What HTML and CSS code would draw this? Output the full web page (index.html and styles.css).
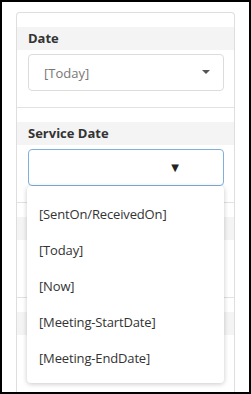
FILE: index.html
```html
<!DOCTYPE html>
<html lang="en">
<head>
    <meta charset="UTF-8">
    <meta name="viewport" content="width=device-width, initial-scale=1.0">
    <title>Date Fields</title>
    <link rel="stylesheet" href="styles.css">
</head>
<body>
    <div class="frame">
        <div class="panel">
            <div class="section">
                <div class="section-title">Date</div>
                <div class="select">
                    <span class="select-value">[Today]</span>
                    <span class="caret"></span>
                </div>
            </div>
            <div class="section">
                <div class="section-title">Service Date</div>
                <div class="select select-open">
                    <span class="caret-glyph">&#9660;</span>
                    <ul class="dropdown">
                        <li>[SentOn/ReceivedOn]</li>
                        <li>[Today]</li>
                        <li>[Now]</li>
                        <li>[Meeting-StartDate]</li>
                        <li>[Meeting-EndDate]</li>
                    </ul>
                </div>
            </div>
            <!-- these two sit under the open list -->
            <div class="section">
                <div class="section-title"></div>
                <div class="select"></div>
            </div>
            <div class="section">
                <div class="section-title"></div>
                <div class="select"></div>
            </div>
        </div>
    </div>
</body>
</html>
```

FILE: styles.css
```css
html, body {
    margin: 0;
    padding: 0;
    background: #fff;
}
body {
    font-family: "Open Sans", "Noto Sans", Arial, sans-serif;
    font-size: 13px;
    color: #333;
}
.frame {
    width: 251px;
    height: 394px;
    box-sizing: border-box;
    border: 2px solid #000;
    overflow: hidden;
    padding: 10px 14px 0;
}
.panel {
    border: 1px solid #dedede;
    border-bottom: none;
    border-radius: 4px 4px 0 0;
    background: #fff;
}
.section {
    padding: 14px 0 16px;
    border-bottom: 1px solid #e2e2e2;
}
.section-title {
    height: 23px;
    line-height: 23px;
    padding-left: 11px;
    background: #f4f4f4;
    font-weight: bold;
    font-size: 13px;
    color: #333;
}
.select {
    position: relative;
    margin: 4px 10px 0 11px;
    height: 37px;
    box-sizing: border-box;
    border: 1px solid #dcdcdc;
    border-radius: 4px;
    display: flex;
    align-items: center;
    justify-content: space-between;
    padding: 0 13px 0 15px;
}
.select-value {
    color: #777;
}
.caret {
    width: 0;
    height: 0;
    border-left: 4px solid transparent;
    border-right: 4px solid transparent;
    border-top: 4px solid #555;
    margin-top: -2px;
}
.select-open {
    border-color: #7fb0dc;
    justify-content: flex-end;
    padding-right: 44px;
}
.caret-glyph {
    font-family: "DejaVu Sans", sans-serif;
    font-size: 10px;
    color: #222;
}
.dropdown {
    position: absolute;
    top: 36px;
    left: -2px;
    width: 197px;
    box-sizing: border-box;
    margin: 0;
    padding: 10px 0 7px;
    list-style: none;
    background: #fff;
    border-radius: 4px;
    box-shadow: 0 1px 5px rgba(0, 0, 0, 0.22);
    z-index: 10;
}
.dropdown li {
    height: 36px;
    line-height: 36px;
    padding-left: 12px;
    color: #333;
    letter-spacing: -0.15px;
    white-space: nowrap;
}
```
